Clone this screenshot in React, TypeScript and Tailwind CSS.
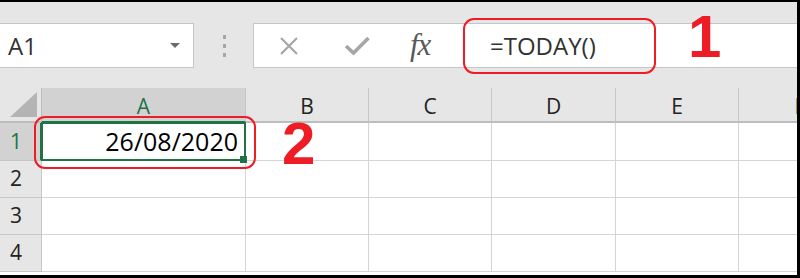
import React from "react";

const cols = ["A", "B", "C", "D", "E", "F"];
const rows = [1, 2, 3, 4];

const ui = { fontFamily: '"Open Sans", "Noto Sans", sans-serif' };

const App = () => {
  return (
    <div
      className="w-[800px] h-[278px] overflow-hidden bg-white border-t-2 border-r-[3px] border-b-[3px] border-black"
      style={ui}
    >
      {/* toolbar / formula bar */}
      <div className="relative h-[86px] bg-[#e6e6e6] pt-[21px]">
        <div className="flex h-[45px] items-stretch">
          <div className="w-[194px] bg-white border-y border-r border-[#c6c6c6] flex items-center pl-[8px] pr-[13px]">
            <span className="text-[24px] text-[#333] leading-none">A1</span>
            <svg className="ml-auto" width="10" height="6" viewBox="0 0 10 6">
              <path d="M0 0 L10 0 L5 5 Z" fill="#6b6b6b" />
            </svg>
          </div>
          <div className="w-[59px] flex flex-col items-center justify-center gap-[5px] pl-[2px]">
            <div className="w-[3px] h-[4px] bg-[#a6a6a6]" />
            <div className="w-[3px] h-[4px] bg-[#a6a6a6]" />
            <div className="w-[3px] h-[4px] bg-[#a6a6a6]" />
          </div>
          <div className="flex-1 bg-white border-y border-l border-[#c6c6c6] flex items-center">
            <div className="w-[209px] flex items-center h-full">
              <svg className="ml-[25px]" width="20" height="20" viewBox="0 0 20 20">
                <path d="M2 2 L18 18 M18 2 L2 18" stroke="#a6a6a6" strokeWidth="2.2" />
              </svg>
              <svg className="ml-[46px]" width="25" height="20" viewBox="0 0 25 20">
                <path d="M1 10 L8.5 17 L23.5 2" stroke="#a6a6a6" strokeWidth="3.6" fill="none" />
              </svg>
              <span
                className="ml-[40px] text-[31px] italic text-[#595959] leading-none tracking-[-1px] -mt-[3px]"
                style={{ fontFamily: '"Liberation Serif", serif' }}
              >
                fx
              </span>
            </div>
            <span className="ml-[27px] text-[24px] text-[#333] leading-none">=TODAY()</span>
          </div>
        </div>

        {/* annotation 1 */}
        <div className="absolute left-[463px] top-[16px] w-[193px] h-[56px] rounded-[11px] border-2 border-[#ee1c24]" />
        <div
          className="absolute left-[688px] top-[5px] text-[60px] font-bold text-[#ee1c24] leading-none"
          style={{ fontFamily: '"Liberation Sans", Arial, sans-serif' }}
        >
          1
        </div>
      </div>

      {/* sheet */}
      <div className="relative grid grid-cols-[42px_204px_123px_123px_124px_123px_123px] grid-rows-[35px_38px_37px_37px_37px_8px]">
        {/* corner */}
        <div className="bg-[#e6e6e6] border-r border-b-2 border-[#bdbdbd] flex items-end justify-end pr-[4px] pb-[4px]">
          <svg width="27" height="25" viewBox="0 0 27 25">
            <path d="M27 0 L27 25 L0 25 Z" fill="#b4b4b4" />
          </svg>
        </div>
        {cols.map((c) => (
          <div
            key={c}
            className={
              c === "A"
                ? "bg-[#d2d2d2] border-r border-[#c6c6c6] border-b-2 border-b-[#217346] flex items-center justify-center text-[21px] text-[#217346] pt-[4px]"
                : "bg-[#e6e6e6] border-r border-[#c6c6c6] border-b-2 border-b-[#bdbdbd] flex items-center justify-center text-[21px] text-[#222] pt-[4px]"
            }
          >
            {c}
          </div>
        ))}

        {rows.map((r) => (
          <React.Fragment key={r}>
            <div
              className={
                r === 1
                  ? "bg-[#d2d2d2] border-r-2 border-r-[#217346] border-b border-[#c6c6c6] flex items-center pl-[10px] text-[21px] text-[#217346]"
                  : "bg-[#e6e6e6] border-r border-b border-[#c6c6c6] flex items-center pl-[10px] text-[21px] text-[#222]"
              }
            >
              {r}
            </div>
            {cols.map((c) => (
              <div
                key={c}
                className={
                  r === 1 && c === "A"
                    ? "relative z-10 border-r border-b border-[#d4d4d4] bg-white flex items-center justify-end pr-[7px]"
                    : "relative border-r border-b border-[#d4d4d4] bg-white flex items-center justify-end pr-[7px]"
                }
              >
                {r === 1 && c === "A" && (
                  <>
                    <span className="text-[25px] text-black leading-none">26/08/2020</span>
                    <div className="absolute -left-[1px] -top-[1px] -right-[1px] -bottom-[1px] border-2 border-[#217346]" />
                    <div className="absolute -right-[2px] -bottom-[3px] w-[7px] h-[7px] bg-[#217346]" />
                  </>
                )}
              </div>
            ))}
          </React.Fragment>
        ))}
        <div className="col-span-7 bg-white" />

        {/* annotation 2 */}
        <div className="absolute z-20 left-[34px] top-[28px] w-[222px] h-[53px] rounded-[11px] border-2 border-[#ee1c24]" />
        <div
          className="absolute z-20 left-[282px] top-[26px] text-[60px] font-bold text-[#ee1c24] leading-none"
          style={{ fontFamily: '"Liberation Sans", Arial, sans-serif' }}
        >
          2
        </div>
      </div>
    </div>
  );
};

export default App;
